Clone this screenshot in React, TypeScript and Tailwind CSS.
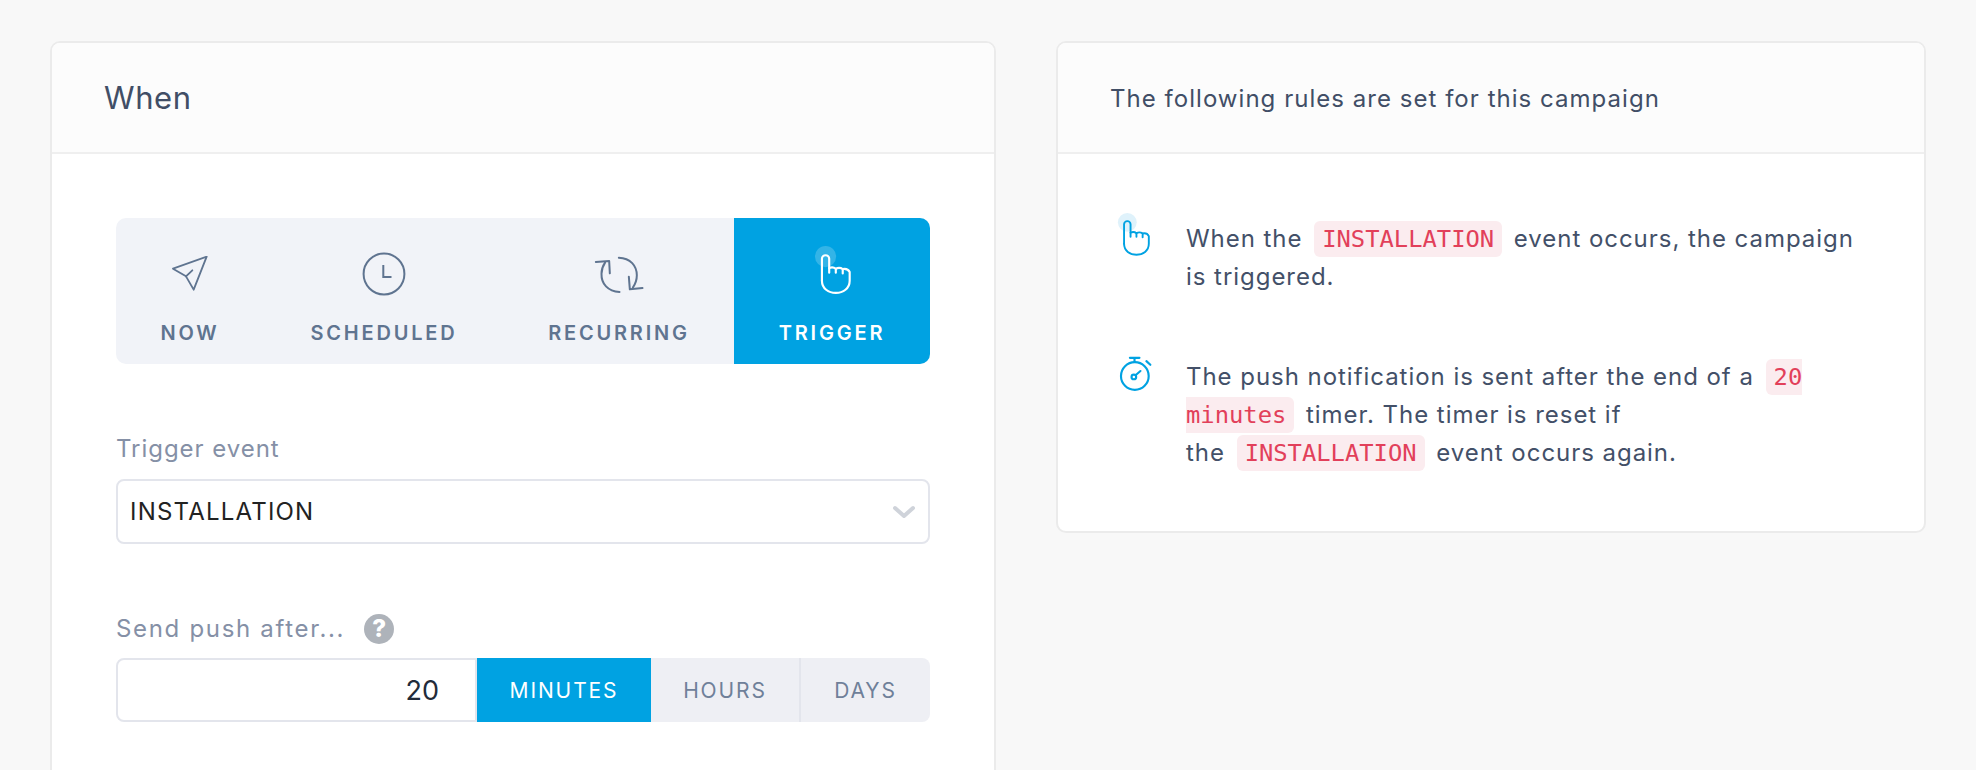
import React from "react";

function Plane() {
  return (
    <svg width="36" height="36" viewBox="0 0 108 108" fill="none" stroke="#5f7490" strokeWidth="5.5" strokeLinejoin="round" strokeLinecap="round">
      <path d="M104 2 L3 38 L42 61 L65 101 Z" />
      <path d="M42 61 L61 43" />
    </svg>
  );
}
function Clock() {
  return (
    <svg width="44" height="44" viewBox="0 0 44 44" fill="none" stroke="#5f7490" strokeWidth="2">
      <circle cx="22" cy="22" r="20.4" />
      <path d="M21.3 13 V25 H29.5" />
    </svg>
  );
}
function Recur() {
  return (
    <svg width="57" height="45" viewBox="150 150 170 135" fill="none" stroke="#5f7490" strokeWidth="6" strokeLinecap="round" strokeLinejoin="round">
      <path d="M235 270 C200 268 180 245 181 215 C181 200 186 190 192 181" />
      <path d="M164 180 L204 177 L206 214" />
      <path d="M233 167 C268 168 287 192 287 220 C287 235 282 247 275 257" />
      <path d="M304 258 L266 262 L263 224" />
    </svg>
  );
}
function Hand({ color, ring, size }: { color: string; ring: string; size: number }) {
  return (
    <svg width={size} height={(size * 150) / 112} viewBox="810 130 112 150" fill="none" stroke={color} strokeWidth="6.5" strokeLinecap="round" strokeLinejoin="round">
      <circle cx="845" cy="165" r="32" fill={ring} stroke="none" />
      <path d="M834 238 V172 a11 11 0 0 1 22 0 V214" />
      <path d="M856 200 q11 -5 20 2 V214" />
      <path d="M876 202 q11 -6 21 1 V216" />
      <path d="M897 203 q15 -3 21 9 V238 C918 262 898 275 876 275 C854 275 834 262 834 238" />
    </svg>
  );
}
function Watch() {
  return (
    <svg width="33" height="36" viewBox="90 45 100 108" fill="none" stroke="#00a2e2" strokeWidth="6.5" strokeLinecap="round">
      <circle cx="138" cy="105" r="42" />
      <path d="M123 50 H152 M137 50 V62 M173 60 L185 71" />
      <circle cx="135" cy="108" r="7" />
      <path d="M141 102 L155 90" />
    </svg>
  );
}
function Chevron() {
  return (
    <svg width="24" height="14" viewBox="0 0 24 14" fill="none" stroke="#cfd3da" strokeWidth="4" strokeLinecap="round" strokeLinejoin="round">
      <path d="M3 3 L12 11 L21 3" />
    </svg>
  );
}

function Tab({ icon, label, active, w }: { icon: React.ReactNode; label: string; active?: boolean; w: string }) {
  return (
    <div className={`${w} flex flex-col items-center ${active ? "bg-[#00a2e2] text-white" : "text-[#5f7490]"}`}>
      <div className="h-[58px] mt-[27px] flex items-center justify-center">{icon}</div>
      <div className="mt-[18px] text-[20px] leading-[24px] font-semibold tracking-[0.14em]">{label}</div>
    </div>
  );
}

function Code({ children }: { children: React.ReactNode }) {
  return (
    <code className="bg-[#fbecef] text-[#e2405a] rounded-[6px] px-[8px] py-[4px] mx-[4px] text-[23.8px] font-['DejaVu_Sans_Mono',monospace] tracking-normal">
      {children}
    </code>
  );
}

export default function App() {
  return (
    <div className="h-[770px] overflow-hidden bg-[#f8f8f8] font-['Inter',sans-serif] pt-[41px] pl-[50px] flex items-start gap-[60px]">
      <section className="w-[946px] h-[800px] shrink-0 bg-white border-2 border-[#ebebeb] rounded-[10px] overflow-hidden">
        <header className="h-[111px] pt-[2px] bg-[#fcfcfc] border-b-2 border-[#efefef] flex items-center pl-[52px] text-[31px] text-[#414e66] tracking-[0.02em]">
          When
        </header>
        <div className="px-[64px] pt-[64px]">
          <div className="h-[146px] flex rounded-[10px] overflow-hidden bg-[#f1f3f8]">
            <Tab w="w-[148px]" icon={<Plane />} label="NOW" />
            <Tab w="w-[240px]" icon={<Clock />} label="SCHEDULED" />
            <Tab w="w-[230px]" icon={<Recur />} label="RECURRING" />
            <Tab w="w-[196px]" active icon={<div className="-mt-[8px]"><Hand color="#fff" ring="rgba(255,255,255,.2)" size={37} /></div>} label="TRIGGER" />
          </div>

          <div className="mt-[70px] text-[24px] leading-[30px] text-[#8590a6] tracking-[0.04em]">Trigger event</div>
          <div className="mt-[15px] h-[65px] border-2 border-[#e3e5ec] rounded-[8px] flex items-center justify-between pl-[12px] pr-[12px] text-[24px] text-[#222] bg-white tracking-[0.05em]">
            <span className="pt-[1px]">INSTALLATION</span>
            <Chevron />
          </div>

          <div className="mt-[70px] h-[30px] flex items-center gap-[19px] text-[24px] text-[#8590a6] tracking-[0.07em]">
            <span>Send push after...</span>
            <span className="w-[30px] h-[30px] rounded-full bg-[#aeb3ba] text-white text-[24px] font-extrabold flex items-center justify-center tracking-normal">?</span>
          </div>
          <div className="mt-[14px] h-[64px] flex text-[21px] tracking-[0.09em]">
            <div className="w-[361px] pt-[2px] border-2 border-[#e3e5ec] rounded-l-[8px] flex items-center justify-end pr-[36px] text-[27px] text-[#222b3a] tracking-normal">20</div>
            <div className="w-[174px] pt-[2px] bg-[#00a2e2] text-white flex items-center justify-center">MINUTES</div>
            <div className="w-[150px] pt-[2px] bg-[#eeeff4] text-[#6f8099] flex items-center justify-center border-r-2 border-[#e3e5ec]">HOURS</div>
            <div className="w-[129px] pt-[2px] bg-[#eeeff4] text-[#6f8099] rounded-r-[8px] flex items-center justify-center">DAYS</div>
          </div>
        </div>
      </section>

      <section className="w-[870px] shrink-0 bg-white border-2 border-[#ebebeb] rounded-[10px] overflow-hidden pb-[59px]">
        <header className="h-[111px] pt-[2px] bg-[#fcfcfc] border-b-2 border-[#efefef] flex items-center pl-[52px] text-[24px] text-[#414e66] tracking-[0.043em]">
          The following rules are set for this campaign
        </header>
        <div className="pl-[59px] pr-[54px] pt-[66px] text-[24px] leading-[38px] text-[#435068] tracking-[0.04em]">
          <div className="flex gap-[29px]">
            <div className="w-[40px] shrink-0 -mt-[8px]"><Hand color="#00a2e2" ring="#dff2fb" size={33} /></div>
            <p>When the <Code>INSTALLATION</Code> event occurs, the campaign is triggered.</p>
          </div>
          <div className="flex gap-[29px] mt-[62px]">
            <div className="w-[40px] shrink-0 pl-[2px] -mt-[2px]"><Watch /></div>
            <p>The push notification is sent after the end of a <Code>20 minutes</Code> timer. The timer is reset if<br />the <Code>INSTALLATION</Code> event occurs again.</p>
          </div>
        </div>
      </section>
    </div>
  );
}
